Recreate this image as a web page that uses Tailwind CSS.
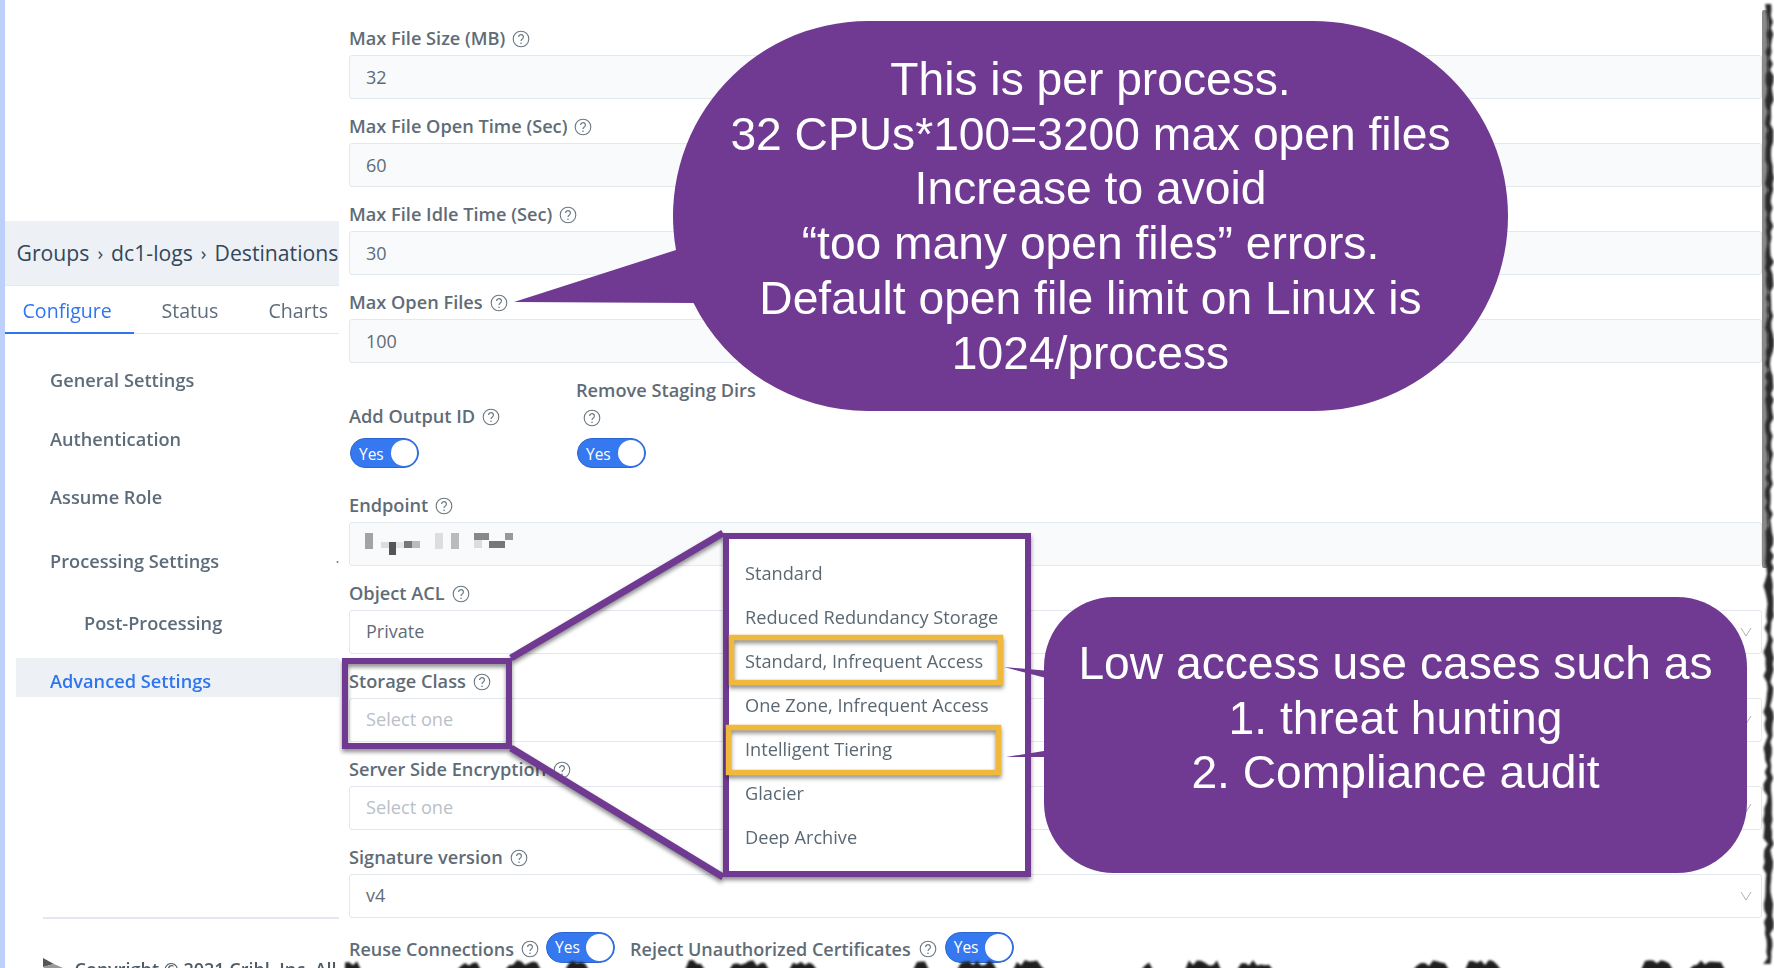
<!DOCTYPE html>
<html lang="en">
<head>
    <meta charset="UTF-8">
    <title>Destinations - Advanced Settings</title>
    <script src="https://cdn.jsdelivr.net/npm/@tailwindcss/browser@4"></script>
</head>
<body class="bg-white">
    <svg class="hidden">
        <symbol id="q" viewBox="0 0 18 18">
            <circle cx="9" cy="9" r="7.8" fill="none" stroke="currentColor" stroke-width="1.1"/>
            <path d="M6.6 7a2.4 2.4 0 1 1 3.7 2c-.9.6-1.3 1-1.3 2" fill="none" stroke="currentColor" stroke-width="1.2"/>
            <circle cx="9" cy="13.2" r=".8" fill="currentColor"/>
        </symbol>
        <symbol id="chev" viewBox="0 0 12 10">
            <path d="M1 1l5 8 5-8" fill="none" stroke="currentColor" stroke-width="1"/>
        </symbol>
    </svg>

    <div class="relative flex w-[1774px] h-[968px] overflow-hidden blur-[0.4px] font-['Open_Sans',sans-serif]">
        <div class="w-[4.5px] shrink-0 bg-[#bcd0fb]"></div>

        <!-- sidebar -->
        <aside class="flex flex-col w-[334px] shrink-0 pt-[221px] text-[#5d6c7b]">
            <div class="flex items-center shrink-0 h-[65px] pl-[12px] bg-[#edf1f5] border-b border-[#e3e8ee] text-[21.2px] text-[#33475b] whitespace-nowrap overflow-hidden">
                <span>Groups</span><span class="mx-[8px] text-[19px]">›</span><span>dc1-logs</span><span class="mx-[8px] text-[19px]">›</span><span>Destinations</span>
            </div>
            <div class="flex shrink-0 h-[48px] border-b border-[#e3e8ee] text-[19.6px]">
                <div class="flex items-center w-[129px] pl-[18px] pt-[3px] -mb-px text-[#2f75f0] border-b-2 border-[#2f75f0]">Configure</div>
                <div class="flex items-center ml-[28px] pt-[2px]">Status</div>
                <div class="flex items-center ml-[50px] pt-[2px]">Charts</div>
            </div>
            <nav class="flex flex-col shrink-0 mt-[27px] text-[18.2px] font-semibold">
                <a class="flex items-center h-[39px] pl-[45.5px]">General Settings</a>
                <a class="flex items-center h-[39px] pl-[45.5px] mt-[20px]">Authentication</a>
                <a class="flex items-center h-[39px] pl-[45.5px] mt-[19px]">Assume Role</a>
                <a class="flex items-center h-[39px] pl-[45.5px] mt-[25px]">Processing Settings</a>
                <a class="flex items-center h-[39px] pl-[79.5px] mt-[23px]">Post-Processing</a>
                <a class="flex items-center h-[39px] pl-[34px] pt-[10px] ml-[11.5px] mt-[14.5px] bg-[#edf1f5] text-[#2f75f0]">Advanced Settings</a>
            </nav>
            <div class="shrink-0 mt-[220px] ml-[38px] border-t-2 border-[#e3e8ee]"></div>
            <div class="flex items-start shrink-0 mt-[39px] ml-[38px] whitespace-nowrap text-[18px] font-semibold text-[#4f5b66]">
                <svg class="w-[20px] h-[12px] shrink-0" viewBox="0 0 20 12"><path d="M0 0l11 6-11 3z" fill="#555"/><path d="M0 9l11-3 9 4v2H4z" fill="#999"/></svg>
                <span class="ml-[12px] mt-[1px] leading-[20px]">Copyright © 2021 Cribl, Inc. All</span>
            </div>
        </aside>

        <!-- form -->
        <main class="relative flex-1 bg-white pl-[10.5px] pr-[12px] pt-[23px] text-[18.2px] font-semibold text-[#5f6c77]">
            <div class="mb-[12px]">
                <label class="flex items-center gap-[7px] h-8 pb-[1px]">Max File Size (MB) <svg class="w-[18px] h-[18px] text-[#6b7780]"><use href="#q"/></svg></label>
                <div class="flex items-center h-[44px] pl-[16px] bg-[#f9fafc] border border-[#e3e8ee] rounded-[3px] text-[18px] font-normal">32</div>
            </div>
            <div class="mb-[12px]">
                <label class="flex items-center gap-[7px] h-8 pb-[1px]">Max File Open Time (Sec) <svg class="w-[18px] h-[18px] text-[#6b7780]"><use href="#q"/></svg></label>
                <div class="flex items-center h-[44px] pl-[16px] bg-[#f9fafc] border border-[#e3e8ee] rounded-[3px] text-[18px] font-normal">60</div>
            </div>
            <div class="mb-[12px]">
                <label class="flex items-center gap-[7px] h-8 pb-[1px]">Max File Idle Time (Sec) <svg class="w-[18px] h-[18px] text-[#6b7780]"><use href="#q"/></svg></label>
                <div class="flex items-center h-[44px] pl-[16px] bg-[#f9fafc] border border-[#e3e8ee] rounded-[3px] text-[18px] font-normal">30</div>
            </div>
            <div class="mb-[12px]">
                <label class="flex items-center gap-[7px] h-8 pb-[1px]">Max Open Files <svg class="w-[18px] h-[18px] text-[#6b7780]"><use href="#q"/></svg></label>
                <div class="flex items-center h-[44px] pl-[16px] bg-[#f9fafc] border border-[#e3e8ee] rounded-[3px] text-[18px] font-normal">100</div>
            </div>

            <div class="flex pt-[3px] mb-[22px]">
                <div class="flex flex-col w-[227px] pt-[27px]">
                    <label class="flex items-center gap-[7px] h-[27px] pb-[3px]">Add Output ID <svg class="w-[18px] h-[18px] text-[#6b7780]"><use href="#q"/></svg></label>
                    <div class="relative w-[69px] h-[30px] mt-[6px] ml-px rounded-full bg-[#3578f0] border border-[#2b66d0]">
                        <span class="absolute left-[8px] top-[4px] text-[15.5px] font-medium leading-[22px] text-white">Yes</span>
                        <span class="absolute right-[1px] top-[1px] w-[26px] h-[26px] rounded-full bg-white"></span>
                    </div>
                </div>
                <div class="flex flex-col w-[200px]">
                    <label class="flex items-center h-[27px] pb-[2px] whitespace-nowrap">Remove Staging Dirs</label>
                    <div class="flex items-center h-[27px] pl-[7px] pb-[2px]"><svg class="w-[18px] h-[18px] text-[#6b7780]"><use href="#q"/></svg></div>
                    <div class="relative w-[69px] h-[30px] mt-[6px] ml-px rounded-full bg-[#3578f0] border border-[#2b66d0]">
                        <span class="absolute left-[8px] top-[4px] text-[15.5px] font-medium leading-[22px] text-white">Yes</span>
                        <span class="absolute right-[1px] top-[1px] w-[26px] h-[26px] rounded-full bg-white"></span>
                    </div>
                </div>
            </div>

            <div class="mb-[12px]">
                <label class="flex items-center gap-[7px] h-8 pb-[1px]">Endpoint <svg class="w-[18px] h-[18px] text-[#6b7780]"><use href="#q"/></svg></label>
                <div class="flex items-start h-[44px] pl-[15px] pt-[10px] bg-[#f9fafc] border border-[#e3e8ee] rounded-[3px]">
                    <svg class="w-[150px] h-[24px]" viewBox="365 534 150 24" shape-rendering="crispEdges">
                        <rect x="365" y="534" width="8" height="16" fill="#a3a3a3"/>
                        <rect x="381" y="543" width="8" height="6" fill="#ddd"/>
                        <rect x="389" y="543" width="7" height="13" fill="#555"/>
                        <rect x="396" y="543" width="8" height="6" fill="#e6e6e6"/>
                        <rect x="404" y="542" width="8" height="7" fill="#777"/>
                        <rect x="412" y="542" width="8" height="7" fill="#bbb"/>
                        <rect x="435" y="534" width="8" height="16" fill="#ddd"/>
                        <rect x="451" y="534" width="8" height="16" fill="#bbb"/>
                        <rect x="474" y="534" width="15" height="7" fill="#888"/>
                        <rect x="474" y="541" width="8" height="8" fill="#ddd"/>
                        <rect x="489" y="542" width="16" height="7" fill="#777"/>
                        <rect x="505" y="534" width="8" height="7" fill="#999"/>
                    </svg>
                </div>
            </div>
            <div class="mb-[12px]">
                <label class="flex items-center gap-[7px] h-8 pb-[1px]">Object ACL <svg class="w-[18px] h-[18px] text-[#6b7780]"><use href="#q"/></svg></label>
                <div class="flex items-center justify-between h-[44px] pl-[16px] pr-[9px] pb-[1px] border border-[#e3e8ee] rounded-[3px] text-[18px] font-normal">Private <svg class="w-[12px] h-[10px] text-[#aab3bb]"><use href="#chev"/></svg></div>
            </div>
            <div class="mb-[12px]">
                <label class="flex items-center gap-[7px] h-8 pb-[1px]">Storage Class <svg class="w-[18px] h-[18px] text-[#6b7780]"><use href="#q"/></svg></label>
                <div class="flex items-center justify-between h-[44px] pl-[16px] pr-[9px] pb-[1px] border border-[#e3e8ee] rounded-[3px] text-[18.2px] font-normal text-[#b9c0c7]">Select one <svg class="w-[12px] h-[10px] text-[#aab3bb]"><use href="#chev"/></svg></div>
            </div>
            <div class="mb-[12px]">
                <label class="flex items-center gap-[7px] h-8 pb-[1px]">Server Side Encryption <svg class="w-[18px] h-[18px] text-[#6b7780]"><use href="#q"/></svg></label>
                <div class="flex items-center justify-between h-[44px] pl-[16px] pr-[9px] pb-[1px] border border-[#e3e8ee] rounded-[3px] text-[18.2px] font-normal text-[#b9c0c7]">Select one <svg class="w-[12px] h-[10px] text-[#aab3bb]"><use href="#chev"/></svg></div>
            </div>
            <div class="mb-[14px]">
                <label class="flex items-center gap-[7px] h-8 pb-[1px]">Signature version <svg class="w-[18px] h-[18px] text-[#6b7780]"><use href="#q"/></svg></label>
                <div class="flex items-center justify-between h-[44px] pl-[16px] pr-[9px] pb-[1px] border border-[#e3e8ee] rounded-[3px] text-[18px] font-normal">v4 <svg class="w-[12px] h-[10px] text-[#aab3bb]"><use href="#chev"/></svg></div>
            </div>

            <div class="flex items-center h-[31px] text-[18px] whitespace-nowrap">
                <span class="pt-[3px]">Reuse Connections</span>
                <svg class="w-[18px] h-[18px] ml-[7px] mt-[3px] text-[#6b7780]"><use href="#q"/></svg>
                <div class="relative w-[69px] h-[31px] ml-[7px] rounded-full bg-[#3578f0] border border-[#2b66d0]">
                    <span class="absolute left-[8px] top-[3px] text-[15.5px] font-medium leading-[22px] text-white">Yes</span>
                    <span class="absolute right-[1px] top-[1px] w-[27px] h-[27px] rounded-full bg-white"></span>
                </div>
                <span class="ml-[15px] pt-[3px]">Reject Unauthorized Certificates</span>
                <svg class="w-[18px] h-[18px] ml-[8px] mt-[3px] text-[#6b7780]"><use href="#q"/></svg>
                <div class="relative w-[69px] h-[31px] ml-[8px] rounded-full bg-[#3578f0] border border-[#2b66d0]">
                    <span class="absolute left-[8px] top-[3px] text-[15.5px] font-medium leading-[22px] text-white">Yes</span>
                    <span class="absolute right-[1px] top-[1px] w-[27px] h-[27px] rounded-full bg-white"></span>
                </div>
            </div>
        </main>

        <!-- slide annotations drawn on top of the screenshot -->
        <svg class="absolute inset-0 w-[1774px] h-[968px]" viewBox="0 0 1774 968">
            <circle cx="337.5" cy="562" r="1" fill="#777"/>
            <g class="drop-shadow-[0_3px_2px_rgba(0,0,0,0.45)]">
                <path d="M511 658L723 533M511 748L723 877" fill="none" stroke="#703a92" stroke-width="7"/>
                <rect x="345" y="661" width="164" height="85" fill="none" stroke="#703a92" stroke-width="6"/>
                <rect x="726" y="536" width="302" height="338" fill="#fff" stroke="#703a92" stroke-width="6"/>
            </g>
            <g class="drop-shadow-[0_3px_2px_rgba(0,0,0,0.45)]" fill="none" stroke="#f0b93c" stroke-width="5.5">
                <rect x="731.5" y="637.5" width="269" height="45"/>
                <rect x="728.5" y="727.5" width="270" height="45"/>
            </g>
            <path d="M868 21H1313A195 195 0 0 1 1313 411H868A195 195 0 0 1 693.5 303L514 302L676 250A195 195 0 0 1 868 21Z" fill="#703a92"/>
            <path d="M1004 667L1050 671V679ZM1006 757L1050 750V757Z" fill="#703a92"/>
            <rect x="1044" y="597" width="703" height="276" rx="70" fill="#703a92"/>
        </svg>

        <div class="absolute left-[745px] top-[552px] flex flex-col text-[18.2px] text-[#5a6873]">
            <div class="flex items-center h-[44px]">Standard</div>
            <div class="flex items-center h-[44px]">Reduced Redundancy Storage</div>
            <div class="flex items-center h-[44px]">Standard, Infrequent Access</div>
            <div class="flex items-center h-[44px]">One Zone, Infrequent Access</div>
            <div class="flex items-center h-[44px]">Intelligent Tiering</div>
            <div class="flex items-center h-[44px]">Glacier</div>
            <div class="flex items-center h-[44px]">Deep Archive</div>
        </div>

        <div class="absolute left-[673px] top-[52px] w-[835px] text-center text-[46.2px] leading-[54.7px] text-white font-['Liberation_Sans',Arial,sans-serif]">
            <p>This is per process.</p>
            <p>32 CPUs*100=3200 max open files</p>
            <p>Increase to avoid</p>
            <p>“too many open files” errors.</p>
            <p>Default open file limit on Linux is</p>
            <p>1024/process</p>
        </div>

        <div class="absolute left-[1044px] top-[636px] w-[703px] text-center text-[46.2px] leading-[54.7px] text-white font-['Liberation_Sans',Arial,sans-serif]">
            <p>Low access use cases such as</p>
            <p>1. threat hunting</p>
            <p>2. Compliance audit</p>
        </div>

        <!-- torn paper edge of the slide image -->
        <svg class="absolute inset-0 w-[1774px] h-[968px]" viewBox="0 0 1774 968">
            <rect x="1762" y="10" width="6" height="558" rx="2" fill="#8a8a8a"/>
            <path id="tornRight" fill="#2a2a2a" class="blur-[0.8px]"/>
            <path id="tornBottom" fill="#1f1f1f" class="blur-[0.8px]"/>
        </svg>
    </div>

    <script>
        // small seeded generator so the torn edge comes out the same every time
        let seed = 7331;
        function rnd() {
            seed = (seed * 16807) % 2147483647;
            return seed / 2147483647;
        }

        let right = "M1771 4";
        let back = [];
        for (let y = 4; y <= 968; y += 6) {
            let inner = y < 568 ? 1765 + rnd() * 3 : 1763 + rnd() * 5;
            right += " L" + inner.toFixed(1) + " " + y;
            back.unshift((1770 + rnd() * 4).toFixed(1) + " " + y);
        }
        document.getElementById("tornRight").setAttribute("d", right + " L" + back.join(" L") + " Z");

        let bottom = "M345 970";
        for (let x = 345; x <= 1770; x += 4) {
            let clump = Math.sin(x / 9) + Math.sin(x / 37);
            let h = clump > 0.5 ? 2 + rnd() * 6 : -2;
            bottom += " L" + x + " " + (968 - h).toFixed(1);
        }
        document.getElementById("tornBottom").setAttribute("d", bottom + " L1774 970 Z");
    </script>
</body>
</html>
